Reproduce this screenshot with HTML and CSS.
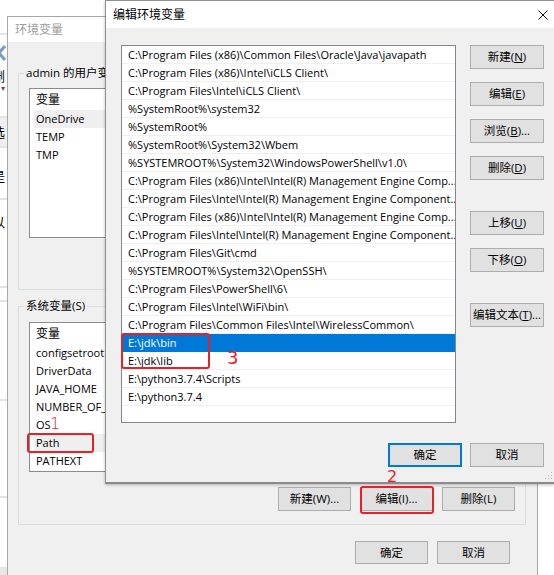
FILE: index.html
```html
<!DOCTYPE html>
<html lang="zh-CN">
<head>
<meta charset="utf-8">
<title>编辑环境变量</title>
<link rel="stylesheet" href="styles.css">
</head>
<body>
<div class="desktop">

  <div class="win back-win">
    <div class="bw-gap h33"></div>
    <div class="bw-line"></div>
    <div class="bw-gap h9"></div>
    <svg class="bw-icon" width="16" height="18" viewBox="0 0 16 18"><path d="M2 2 L14 16 M14 2 L2 16" stroke="#7f9cc4" stroke-width="3.2" fill="none"/></svg>
    <div class="bw-text t1">删</div>
    <div class="bw-caret">▾</div>
    <div class="bw-gap h24"></div>
    <div class="bw-line"></div>
    <div class="bw-band"><span class="bw-text">选</span></div>
    <div class="bw-line"></div>
    <div class="bw-text t2">是</div>
    <div class="bw-gap h14"></div>
    <div class="bw-line"></div>
    <div class="bw-text t3">以</div>
    <div class="bw-gap h56"></div>
    <div class="bw-line"></div>
    <div class="bw-gap h12"></div>
    <div class="bw-line"></div>
    <div class="bw-gap h97"></div>
    <div class="bw-line"></div>
    <div class="bw-gap h95"></div>
    <div class="bw-line"></div>
    <div class="bw-gap h69"></div>
    <div class="bw-foot"></div>
  </div>

  <div class="win env-win">
    <div class="env-title">环境变量</div>
    <div class="env-body">
      <fieldset class="group g-user">
        <legend>admin 的用户变量(U)</legend>
        <div class="varlist">
          <div class="vl-head">变量</div>
          <div class="vl-row sel">OneDrive</div>
          <div class="vl-row">TEMP</div>
          <div class="vl-row">TMP</div>
        </div>
      </fieldset>
      <fieldset class="group g-sys">
        <legend>系统变量(S)</legend>
        <div class="varlist">
          <div class="vl-head">变量</div>
          <div class="vl-row">configsetroot</div>
          <div class="vl-row">DriverData</div>
          <div class="vl-row">JAVA_HOME</div>
          <div class="vl-row">NUMBER_OF_PROCESSORS</div>
          <div class="vl-row">OS</div>
          <div class="vl-row sel">Path</div>
          <div class="vl-row">PATHEXT</div>
        </div>
        <div class="btn-row">
          <button class="btn">新建(W)...</button>
          <button class="btn">编辑(I)...</button>
          <button class="btn">删除(L)</button>
        </div>
      </fieldset>
      <div class="btn-row env-foot">
        <button class="btn">确定</button>
        <button class="btn">取消</button>
      </div>
    </div>
    <svg class="grip env-grip" width="8" height="8" viewBox="0 0 8 8"><g fill="#b5b5b5"><rect x="6" y="0" width="1" height="1"/><rect x="3" y="3" width="1" height="1"/><rect x="6" y="3" width="1" height="1"/><rect x="0" y="6" width="1" height="1"/><rect x="3" y="6" width="1" height="1"/><rect x="6" y="6" width="1" height="1"/></g></svg>
  </div>

  <div class="win edit-win">
    <div class="edit-title">
      <span>编辑环境变量</span>
      <svg class="close" width="10" height="10" viewBox="0 0 10 10"><path d="M0.5 0.5 L9.5 9.5 M9.5 0.5 L0.5 9.5" stroke="#111" stroke-width="1" fill="none"/></svg>
    </div>
    <div class="edit-body">
      <div class="pathlist">
        <div class="pl-row">C:\Program Files (x86)\Common Files\Oracle\Java\javapath</div>
        <div class="pl-row">C:\Program Files (x86)\Intel\iCLS Client\</div>
        <div class="pl-row">C:\Program Files\Intel\iCLS Client\</div>
        <div class="pl-row">%SystemRoot%\system32</div>
        <div class="pl-row">%SystemRoot%</div>
        <div class="pl-row">%SystemRoot%\System32\Wbem</div>
        <div class="pl-row">%SYSTEMROOT%\System32\WindowsPowerShell\v1.0\</div>
        <div class="pl-row">C:\Program Files (x86)\Intel\Intel(R) Management Engine Comp...</div>
        <div class="pl-row">C:\Program Files\Intel\Intel(R) Management Engine Component...</div>
        <div class="pl-row">C:\Program Files (x86)\Intel\Intel(R) Management Engine Comp...</div>
        <div class="pl-row">C:\Program Files\Intel\Intel(R) Management Engine Component...</div>
        <div class="pl-row">C:\Program Files\Git\cmd</div>
        <div class="pl-row">%SYSTEMROOT%\System32\OpenSSH\</div>
        <div class="pl-row">C:\Program Files\PowerShell\6\</div>
        <div class="pl-row">C:\Program Files\Intel\WiFi\bin\</div>
        <div class="pl-row">C:\Program Files\Common Files\Intel\WirelessCommon\</div>
        <div class="pl-row sel">E:\jdk\bin</div>
        <div class="pl-row">E:\jdk\lib</div>
        <div class="pl-row">E:\python3.7.4\Scripts</div>
        <div class="pl-row">E:\python3.7.4</div>
        <div class="pl-row"></div>
      </div>
      <div class="side-btns">
        <button class="btn">新建(<u>N</u>)</button>
        <button class="btn">编辑(<u>E</u>)</button>
        <button class="btn">浏览(<u>B</u>)...</button>
        <button class="btn">删除(<u>D</u>)</button>
        <button class="btn gap-lg">上移(<u>U</u>)</button>
        <button class="btn">下移(<u>O</u>)</button>
        <button class="btn gap-lg">编辑文本(<u>T</u>)...</button>
      </div>
      <div class="btn-row edit-foot">
        <button class="btn default">确定</button>
        <button class="btn">取消</button>
      </div>
    </div>
    <svg class="grip edit-grip" width="8" height="8" viewBox="0 0 8 8"><g fill="#b5b5b5"><rect x="6" y="0" width="1" height="1"/><rect x="3" y="3" width="1" height="1"/><rect x="6" y="3" width="1" height="1"/><rect x="0" y="6" width="1" height="1"/><rect x="3" y="6" width="1" height="1"/><rect x="6" y="6" width="1" height="1"/></g></svg>
  </div>

  <div class="mark box-jdk"></div>
  <div class="mark-num num-3">3</div>
  <div class="mark box-path"></div>
  <div class="mark-num num-1">1</div>
  <div class="mark box-edit"></div>
  <div class="mark-num num-2">2</div>
</div>
</body>
</html>
```

FILE: styles.css
```css
* { box-sizing: border-box; }

body {
  margin: 0;
  font-family: "Open Sans", "Noto Sans CJK SC", sans-serif;
  font-size: 12px;
  color: #000;
}

.desktop {
  position: relative;
  width: 554px;
  height: 575px;
  overflow: hidden;
  background: #fff;
}

.win { position: absolute; }

/* ---------- back window strip ---------- */
.back-win {
  left: 0;
  top: 0;
  width: 8px;
  height: 575px;
  overflow: hidden;
  display: flex;
  flex-direction: column;
  background: #fff;
}
.bw-gap { flex: none; }
.h33 { height: 33px; }
.h9 { height: 9px; }
.h24 { height: 24px; }
.h14 { height: 14px; }
.h56 { height: 56px; }
.h12 { height: 12px; }
.h97 { height: 97px; }
.h95 { height: 95px; }
.h69 { height: 69px; }
.bw-line { flex: none; height: 2px; background: #e3e3e3; }
.bw-icon { flex: none; margin-left: -9px; display: block; }
.bw-text {
  flex: none;
  margin-left: -8px;
  font-size: 13px;
  line-height: 16px;
  white-space: nowrap;
}
.t1 { margin-top: 6px; }
.t2 { margin-top: 20px; }
.t3 { margin-top: 14px; }
.bw-caret { flex: none; margin-left: 1px; font-size: 8px; line-height: 8px; color: #555; }
.bw-band {
  flex: none;
  height: 28px;
  background: #f0f0f0;
  display: flex;
  align-items: center;
}
.bw-band .bw-text { margin-left: -8px; }
.bw-foot { flex: 1; background: #e6e6e6; }

/* ---------- environment variables window ---------- */
.env-win {
  left: 7px;
  top: 16px;
  width: 531px;
  height: 575px;
  border: 1px solid #a8a8a8;
  background: #f0f0f0;
}
.env-title {
  height: 25px;
  background: #fff;
  padding-left: 7px;
  line-height: 25px;
  color: #9d9d9d;
  font-size: 12px;
}
.env-body {
  display: flex;
  flex-direction: column;
  padding: 23px 11px 0 10px;
}

.group {
  margin: 0;
  min-width: 0;
  border: 1px solid #dcdcdc;
  padding: 0 10px 13px 5px;
}
.group legend {
  padding: 0 2px;
  font-size: 11.5px;
  line-height: 16px;
  white-space: nowrap;
}
.g-user { padding-bottom: 51px; }
.g-user .varlist { margin-top: 7px; }
.g-sys { margin-top: 8px; }
.g-sys .varlist { margin-top: 8px; }

.varlist {
  margin-left: 5px;
  height: 150px;
  background: #fff;
  border: 1px solid #8c8c8c;
  overflow: hidden;
  padding-left: 4px;
  font-size: 11px;
}
.vl-head {
  height: 21px;
  padding-left: 2px;
  line-height: 22px;
  font-size: 12px;
}
.vl-row {
  height: 18px;
  padding-left: 2px;
  line-height: 18px;
  white-space: nowrap;
}
.vl-row.sel { background: #efefef; }

.btn-row {
  display: flex;
  justify-content: flex-end;
  gap: 9px;
}
.g-sys .btn-row { margin-top: 15px; }

.btn {
  font-family: inherit;
  font-size: 11.5px;
  color: #000;
  width: 73px;
  height: 24px;
  padding: 0;
  margin: 0;
  background: #e1e1e1;
  border: 1px solid #adadad;
  border-radius: 0;
  line-height: 20px;
  white-space: nowrap;
}
.btn u { text-underline-offset: 1px; }

.env-foot {
  margin-top: 16px;
  margin-right: 16px;
}
.env-foot .btn { height: 23px; }

.grip { position: absolute; display: block; }
.env-grip { right: 1px; bottom: 1px; }

/* ---------- edit dialog ---------- */
.edit-win {
  left: 105px;
  top: 0;
  width: 450px;
  height: 484px;
  border: 1px solid #8f8f8f;
  border-bottom: 2px solid #8a8a8a;
  background: #f0f0f0;
  box-shadow: 0 1px 3px rgba(0, 0, 0, 0.25);
}
.edit-title {
  height: 27px;
  background: #fff;
  display: flex;
  align-items: center;
  justify-content: space-between;
  padding: 0 6px 0 7px;
  font-size: 12px;
  line-height: 16px;
}
.close { display: block; }
.edit-body {
  display: grid;
  grid-template-columns: 335px 74px;
  column-gap: 14px;
  padding: 17px 9px 0 15px;
}
.pathlist {
  height: 378px;
  background: #fff;
  border: 1px solid #828790;
  overflow: hidden;
  font-size: 11px;
}
.pl-row {
  height: 18px;
  border-bottom: 1px solid #f0f0f0;
  padding-left: 6px;
  line-height: 17px;
  white-space: nowrap;
  overflow: hidden;
}
.pl-row.sel {
  background: #0078d7;
  border-bottom-color: #0078d7;
  color: #fff;
}
.side-btns {
  display: flex;
  flex-direction: column;
  gap: 13px;
}
.side-btns .btn { width: 74px; }
.side-btns .gap-lg { margin-top: 18px; }
.edit-foot {
  grid-column: 1 / -1;
  margin-top: 20px;
  gap: 8px;
}
.edit-foot .btn { width: 74px; }
.btn.default { border: 2px solid #0078d7; line-height: 18px; }
.edit-grip { right: 1px; bottom: 2px; }

/* ---------- red annotations ---------- */
.mark {
  position: absolute;
  border: 2px solid #ea2027;
  border-radius: 3px;
}
.box-jdk { left: 121px; top: 333px; width: 89px; height: 36px; }
.box-path { left: 27px; top: 433px; width: 67px; height: 20px; }
.box-edit { left: 360px; top: 486px; width: 74px; height: 28px; }

.mark-num {
  position: absolute;
  color: #ea2027;
  font-family: "DejaVu Sans", sans-serif;
  line-height: 1;
}
.num-3 { left: 227px; top: 349px; font-size: 18px; }
.num-1 { left: 50px; top: 416px; font-size: 16px; font-weight: 200; }
.num-2 { left: 387px; top: 469px; font-size: 16px; }
```
